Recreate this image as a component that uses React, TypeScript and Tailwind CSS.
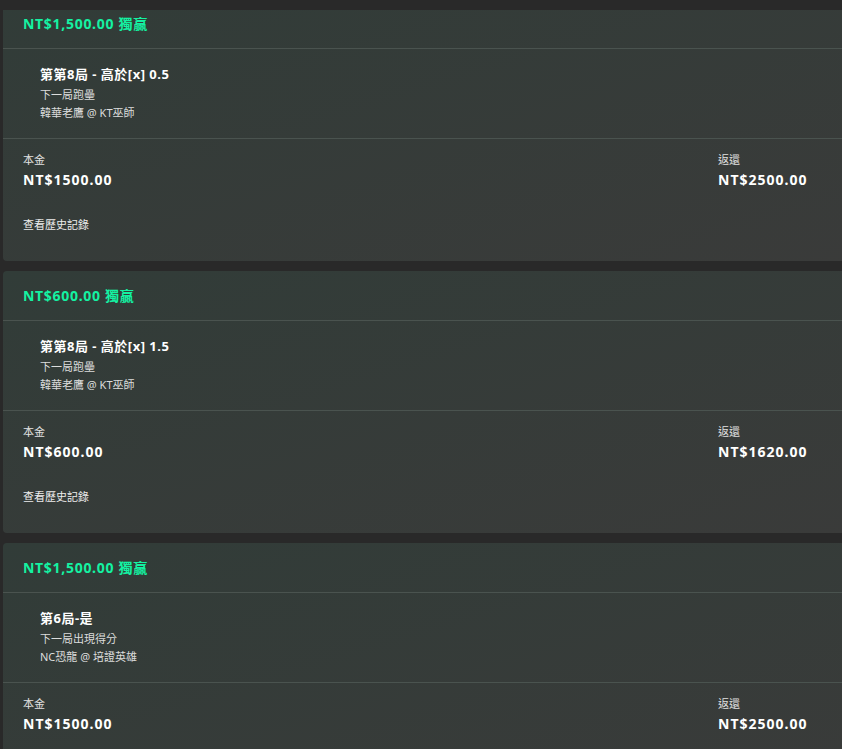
import React from "react";

type Bet = {
  head: string;
  title: string;
  sub1: string;
  sub2: string;
  stake: string;
  ret: string;
};

const bets: Bet[] = [
  {
    head: "NT$1,500.00 獨贏",
    title: "第第8局 - 高於[x] 0.5",
    sub1: "下一局跑壘",
    sub2: "韓華老鷹 @ KT巫師",
    stake: "NT$1500.00",
    ret: "NT$2500.00",
  },
  {
    head: "NT$600.00 獨贏",
    title: "第第8局 - 高於[x] 1.5",
    sub1: "下一局跑壘",
    sub2: "韓華老鷹 @ KT巫師",
    stake: "NT$600.00",
    ret: "NT$1620.00",
  },
  {
    head: "NT$1,500.00 獨贏",
    title: "第6局-是",
    sub1: "下一局出現得分",
    sub2: "NC恐龍 @ 培證英雄",
    stake: "NT$1500.00",
    ret: "NT$2500.00",
  },
];

function Card({ b }: { b: Bet }) {
  return (
    <div className="w-[860px] h-[262px] shrink-0 rounded-[4px] bg-gradient-to-br from-[#313c38] to-[#3a3b3a] flex flex-col">
      <div className="h-[49px] pl-[20px] pt-[15px] text-[14px] leading-[20px] font-bold tracking-[0.7px] text-[#14f2a2]">
        {b.head}
      </div>
      <div className="h-[90px] border-t border-[#4a534f] pl-[37px] pt-[16px] flex flex-col">
        <div className="text-[13px] leading-[18px] font-bold tracking-[0.5px] text-white">{b.title}</div>
        <div className="mt-[3px] text-[11px] leading-[18px] text-[#dcdcdc]">{b.sub1}</div>
        <div className="text-[11px] leading-[18px] text-[#dcdcdc]">{b.sub2}</div>
      </div>
      <div className="flex-1 border-t border-[#4a534f] px-[20px] pt-[13px]">
        <div className="grid grid-cols-[695px_1fr]">
          <div className="flex flex-col">
            <div className="text-[11px] leading-[16px] text-[#e2e2e2]">本金</div>
            <div className="mt-[2px] text-[14px] leading-[20px] font-bold tracking-[1px] text-white">{b.stake}</div>
          </div>
          <div className="flex flex-col">
            <div className="text-[11px] leading-[16px] text-[#e2e2e2]">返還</div>
            <div className="mt-[2px] text-[14px] leading-[20px] font-bold tracking-[1px] text-white">{b.ret}</div>
          </div>
        </div>
        <div className="mt-[27px] text-[11px] leading-[16px] text-[#ececec]">查看歷史記錄</div>
      </div>
    </div>
  );
}

export default function App() {
  return (
    <div
      className="relative h-[749px] w-[842px] overflow-hidden bg-[#292929]"
      style={{ fontFamily: '"Noto Sans", "Noto Sans CJK TC", sans-serif' }}
    >
      <div className="-mt-px pl-[3px] flex flex-col gap-[10px]">
        {bets.map((b, i) => (
          <Card key={i} b={b} />
        ))}
      </div>
      <div className="absolute left-0 top-0 h-[10px] w-full bg-[#292929]" />
    </div>
  );
}
